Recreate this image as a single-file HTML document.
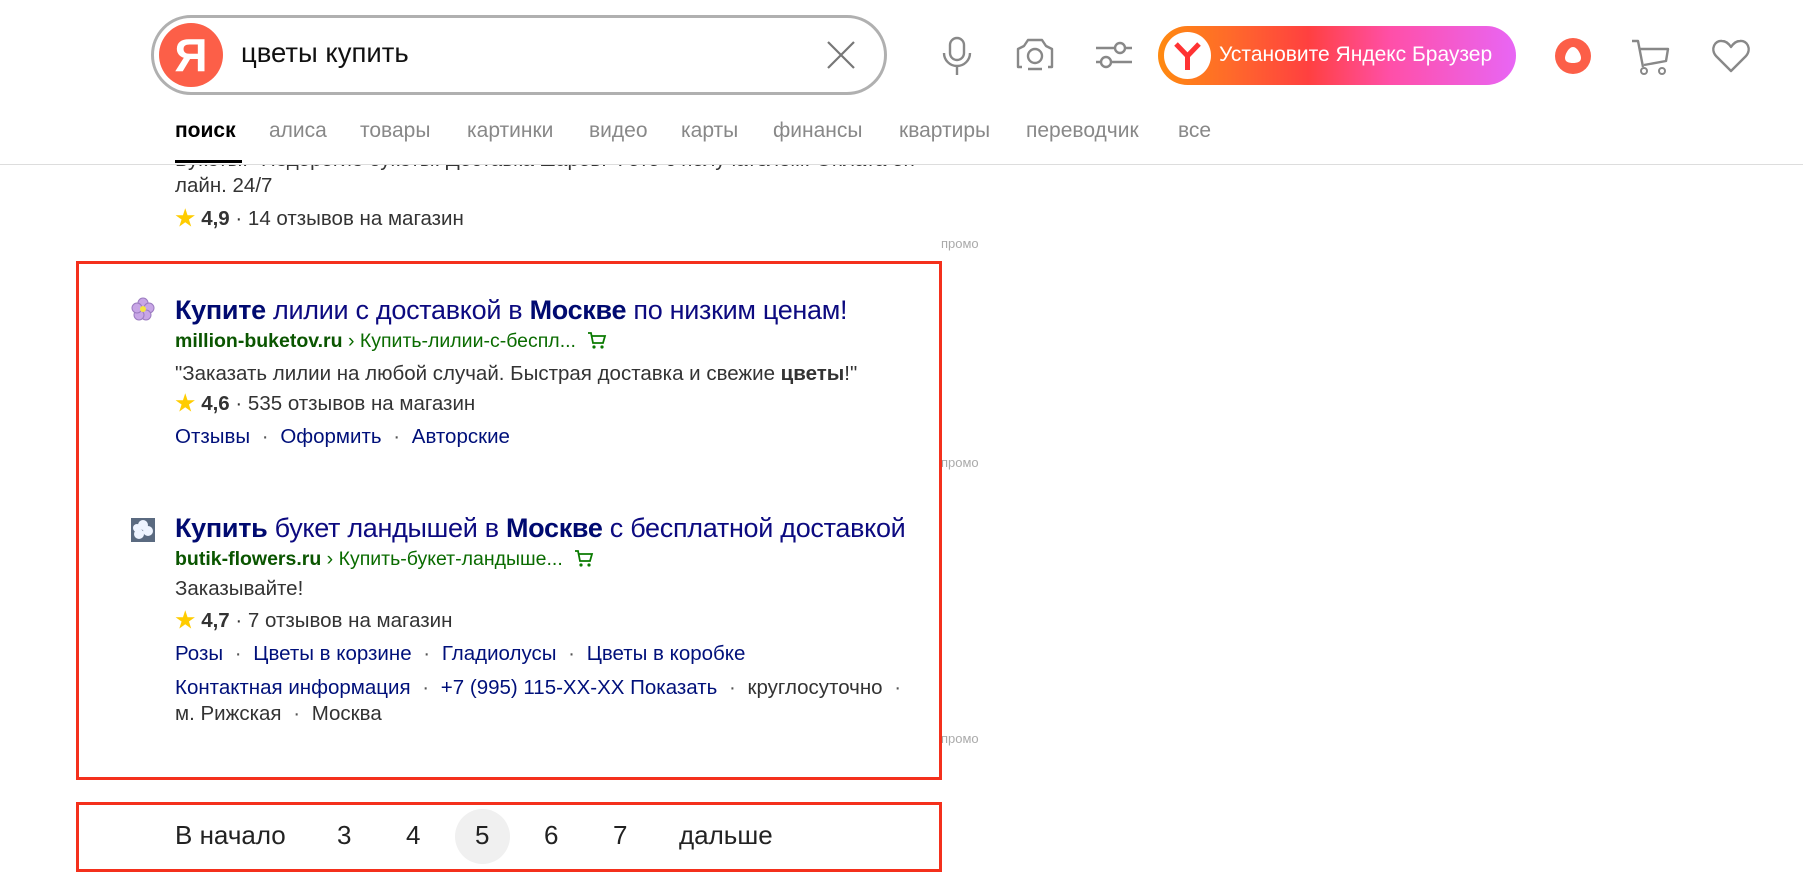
<!DOCTYPE html>
<html><head><meta charset="utf-8"><style>
*{margin:0;padding:0;box-sizing:border-box}
body{width:1803px;height:894px;overflow:hidden;background:#fff;font-family:"Liberation Sans","Noto Sans CJK SC",sans-serif;color:#333;position:relative}
.a{position:absolute;white-space:nowrap}
.t{font-size:20.5px;line-height:24px}
.nav{color:#00107a}
.title{font-size:27px;color:#0c0a80;line-height:30px;letter-spacing:-0.3px}
.title b{color:#000a70}
.url{font-size:19.5px;color:#0a6b00}
.url b{color:#0a5500}
.promo{font-size:13px;color:#aaa}
.tab{font-size:21px;color:#888;top:119px}
.dot{color:#555;padding:0 6px}
.pg{font-size:26px;color:#222;top:820px}
.box{position:absolute;border:3px solid #f4301c}
</style></head><body>
<div class="a t" style="left:175px;top:148px">Букеты." Недорогие букеты. Доставка шаров. Фото с получателем. Оплата он</div>
<div class="a t" style="left:175px;top:174px">лайн. 24/7</div>
<div class="a t" style="left:175px;top:207px"><span style="color:#fc0">★</span> <b>4,9</b> · 14 отзывов на магазин</div>
<div class="a promo" style="left:941px;top:236px">промо</div>
<div class="a promo" style="left:941px;top:455px">промо</div>
<div class="a promo" style="left:941px;top:731px">промо</div>

<div class="a" style="left:0;top:0;width:1803px;height:165px;background:#fff;border-bottom:1px solid #ddd"></div>
<div class="a" style="left:151px;top:15px;width:736px;height:80px;border:3px solid #b0b0b0;border-radius:40px;background:#fff"></div>
<div class="a" style="left:159px;top:23px;width:64px;height:64px;border-radius:50%;background:#fc5f48;color:#fff;font-size:46px;font-weight:bold;text-align:center;line-height:64px">Я</div>
<div class="a" style="left:241px;top:37px;font-size:27.5px;color:#111">цветы купить</div>
<svg class="a" style="left:826px;top:40px" width="30" height="30" viewBox="0 0 30 30"><path d="M2 2L28 28M28 2L2 28" stroke="#777" stroke-width="2.2"/></svg>
<svg class="a" style="left:940px;top:36px" width="34" height="40" viewBox="0 0 34 40"><rect x="10" y="2" width="14" height="22" rx="7" fill="none" stroke="#888" stroke-width="2.4"/><path d="M4 17a13 13 0 0 0 26 0M17 30v9" fill="none" stroke="#888" stroke-width="2.4"/></svg>
<svg class="a" style="left:1016px;top:37px" width="38" height="34" viewBox="0 0 38 34"><path d="M6 30H2V12l6-3 4-6h14l4 6 6 3v18h-4M12 32h14" fill="none" stroke="#888" stroke-width="2.4" stroke-linejoin="round"/><circle cx="19" cy="19" r="7" fill="none" stroke="#888" stroke-width="2.4"/></svg>
<svg class="a" style="left:1094px;top:38px" width="40" height="34" viewBox="0 0 40 34"><path d="M2 10h20M30 10h8M2 24h6M16 24h22" stroke="#888" stroke-width="2.4"/><circle cx="26" cy="10" r="5" fill="none" stroke="#888" stroke-width="2.4"/><circle cx="12" cy="24" r="5" fill="none" stroke="#888" stroke-width="2.4"/></svg>
<div class="a" style="left:1158px;top:26px;width:358px;height:59px;border-radius:30px;background:linear-gradient(90deg,#ff8a10 0%,#ff6a2a 20%,#ff4040 42%,#ff4fa8 65%,#e866f5 100%)"></div>
<div class="a" style="left:1164px;top:32px;width:47px;height:47px;border-radius:50%;background:#fff"></div>
<svg class="a" style="left:1173px;top:41px" width="29" height="30" viewBox="0 0 29 30"><path d="M3 3L14.5 15L26 3M14.5 15V29" fill="none" stroke="#f33" stroke-width="5"/></svg>
<div class="a" style="left:1219px;top:43px;font-size:21px;color:#fff">Установите Яндекс Браузер</div>
<svg class="a" style="left:1554px;top:37px" width="38" height="38" viewBox="0 0 38 38"><circle cx="19" cy="19" r="18" fill="#fc5f48"/><path d="M19 10c-4 0-8 7-8 11 0 4 4 5 8 5s8-1 8-5c0-4-4-11-8-11z" fill="#fff"/></svg>
<svg class="a" style="left:1630px;top:37px" width="40" height="38" viewBox="0 0 40 38"><path d="M2 4h6l5 26M10 12h28l-2 12-22 4" fill="none" stroke="#888" stroke-width="2.4" stroke-linejoin="round"/><circle cx="14" cy="34" r="3" fill="none" stroke="#888" stroke-width="2"/><circle cx="32" cy="34" r="3" fill="none" stroke="#888" stroke-width="2"/></svg>
<svg class="a" style="left:1711px;top:38px" width="40" height="36" viewBox="0 0 40 36"><path d="M20 33L5 18C-1 11 4 2 11 3c4 0 7 3 9 6 2-3 5-6 9-6 7-1 12 8 6 15z" fill="none" stroke="#888" stroke-width="2.4" stroke-linejoin="round"/></svg>
<div class="a tab" style="left:175px;color:#000;font-weight:bold">поиск</div>
<div class="a" style="left:175px;top:160px;width:67px;height:3px;background:#000"></div>
<div class="a tab" style="left:269px">алиса</div>
<div class="a tab" style="left:360px">товары</div>
<div class="a tab" style="left:467px">картинки</div>
<div class="a tab" style="left:589px">видео</div>
<div class="a tab" style="left:681px">карты</div>
<div class="a tab" style="left:773px">финансы</div>
<div class="a tab" style="left:899px">квартиры</div>
<div class="a tab" style="left:1026px">переводчик</div>
<div class="a tab" style="left:1178px">все</div>

<div class="box" style="left:76px;top:261px;width:866px;height:519px"></div>
<svg class="a" style="left:131px;top:297px" width="24" height="24" viewBox="0 0 24 24"><g fill="#c8a6e6" stroke="#9b7bc0"><circle cx="12" cy="6" r="5"/><circle cx="18" cy="11" r="5"/><circle cx="15" cy="18" r="5"/><circle cx="8" cy="18" r="5"/><circle cx="6" cy="11" r="5"/></g><circle cx="12" cy="12" r="3" fill="#f4e640"/></svg>
<div class="a title" style="left:175px;top:295px"><b>Купите</b> лилии с доставкой в <b>Москве</b> по низким ценам!</div>
<div class="a url" style="left:175px;top:330px"><b>million-buketov.ru</b> › Купить-лилии-с-беспл... <svg width="20" height="18" viewBox="0 0 20 18" style="vertical-align:-2px;margin-left:6px"><path d="M1 2h3l2 10h10l2-7H5" fill="none" stroke="#0a7a00" stroke-width="1.8"/><circle cx="7" cy="16" r="1.6" fill="#0a7a00"/><circle cx="15" cy="16" r="1.6" fill="#0a7a00"/></svg></div>
<div class="a t" style="left:175px;top:362px">"Заказать лилии на любой случай. Быстрая доставка и свежие <b>цветы</b>!"</div>
<div class="a t" style="left:175px;top:392px"><span style="color:#fc0">★</span> <b>4,6</b> · 535 отзывов на магазин</div>
<div class="a t nav" style="left:175px;top:425px">Отзывы <span class="dot">·</span> Оформить <span class="dot">·</span> Авторские</div>

<svg class="a" style="left:131px;top:518px" width="24" height="24" viewBox="0 0 24 24"><rect width="24" height="24" fill="#5a6a80"/><g fill="#eef4ff"><circle cx="12" cy="7" r="5"/><circle cx="17" cy="13" r="5"/><circle cx="8" cy="16" r="5"/><circle cx="6" cy="10" r="4"/></g></svg>
<div class="a title" style="left:175px;top:513px"><b>Купить</b> букет ландышей в <b>Москве</b> с бесплатной доставкой</div>
<div class="a url" style="left:175px;top:548px"><b>butik-flowers.ru</b> › Купить-букет-ландыше... <svg width="20" height="18" viewBox="0 0 20 18" style="vertical-align:-2px;margin-left:6px"><path d="M1 2h3l2 10h10l2-7H5" fill="none" stroke="#0a7a00" stroke-width="1.8"/><circle cx="7" cy="16" r="1.6" fill="#0a7a00"/><circle cx="15" cy="16" r="1.6" fill="#0a7a00"/></svg></div>
<div class="a t" style="left:175px;top:577px">Заказывайте!</div>
<div class="a t" style="left:175px;top:609px"><span style="color:#fc0">★</span> <b>4,7</b> · 7 отзывов на магазин</div>
<div class="a t nav" style="left:175px;top:642px">Розы <span class="dot">·</span> Цветы в корзине <span class="dot">·</span> Гладиолусы <span class="dot">·</span> Цветы в коробке</div>
<div class="a t" style="left:175px;top:676px"><span class="nav">Контактная информация</span> <span class="dot">·</span> <span class="nav">+7 (995) 115-XX-XX Показать</span> <span class="dot">·</span> круглосуточно <span class="dot">·</span></div>
<div class="a t" style="left:175px;top:702px">м. Рижская <span class="dot">·</span> Москва</div>

<div class="box" style="left:76px;top:802px;width:866px;height:70px"></div>
<div class="a" style="left:455px;top:809px;width:55px;height:55px;border-radius:50%;background:#f0f0f0"></div>
<div class="a pg" style="left:175px">В начало</div>
<div class="a pg" style="left:337px">3</div>
<div class="a pg" style="left:406px">4</div>
<div class="a pg" style="left:475px">5</div>
<div class="a pg" style="left:544px">6</div>
<div class="a pg" style="left:613px">7</div>
<div class="a pg" style="left:679px">дальше</div>
</body></html>
